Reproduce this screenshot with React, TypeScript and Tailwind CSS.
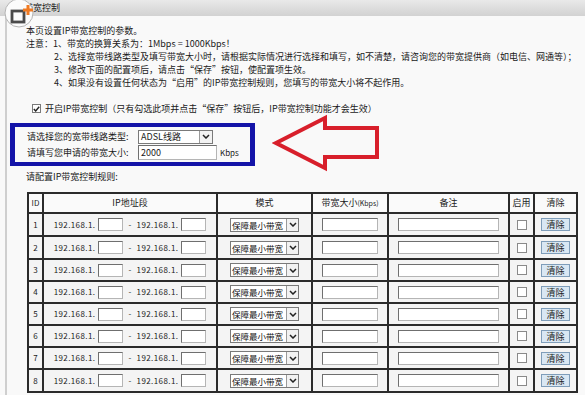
import React from "react";

const font = { fontFamily: '"Noto Sans CJK SC", "Noto Sans", sans-serif' };

const rowHeights = ["h-[23px]", "h-[23px]", "h-[22px]", "h-[22px]", "h-[22px]", "h-[22px]", "h-[22px]", "h-[23px]"];

const cols = "grid grid-cols-[15px_174px_95px_76px_121px_25px_43px]";
const cell = "border-r-2 border-b-2 border-[#2b2b2b] bg-[#f4f4f4] flex items-center justify-center";

const Chevron = () => (
  <svg width="8" height="5" viewBox="0 0 8 5">
    <path d="M1 1 L4 4 L7 1" fill="none" stroke="#222" strokeWidth="1.5" />
  </svg>
);

const TextBox = ({ w }: { w: string }) => (
  <span className={`inline-block ${w} h-[13px] bg-white border border-[#6f6f6f] border-r-[#b5b5b5] border-b-[#b5b5b5]`} />
);

const ModeSelect = () => (
  <div className="flex items-stretch w-[69px] h-[14px] bg-white border border-[#7a7a7a] text-[8.5px] leading-[12px] text-[#111] overflow-hidden">
    <span className="flex-1 pl-[1px] whitespace-nowrap overflow-hidden">保障最小带宽</span>
    <span className="w-[12px] shrink-0 flex items-center justify-center border-l border-[#9a9a9a] bg-[#f2f2f2]">
      <Chevron />
    </span>
  </div>
);

const CornerIcon = () => (
  <svg className="absolute left-[4px] top-0" width="32" height="30" viewBox="0 0 32 30">
    <circle cx="15" cy="13" r="14" fill="#fbfbfb" stroke="#b4b4b4" />
    <rect x="8" y="11" width="12" height="11" fill="none" stroke="#4a4a4a" strokeWidth="2.8" />
    <path d="M24 5 V15 M19 10 H29" stroke="#f07a22" strokeWidth="3" />
  </svg>
);

const Arrow = () => (
  <svg className="absolute left-[272px] top-[114px]" width="110" height="58" viewBox="0 0 110 58">
    <path
      d="M4 29 L53 4 L53 14 L105 14 L105 43 L53 43 L53 54 Z"
      fill="none"
      stroke="#d81f2b"
      strokeWidth="4"
    />
  </svg>
);

const headers = ["ID", "IP地址段", "模式", "带宽大小", "备注", "启用", "清除"];

export default function App() {
  return (
    <div className="relative w-[585px] h-[395px] overflow-hidden bg-[#f9f9f9] text-[#1a1a1a]" style={font}>
      {/* title bar */}
      <div className="h-[16px] bg-gradient-to-b from-[#e9e9e9] to-[#d2d2d2] pl-[24px] text-[9px] leading-[16px]">
        带宽控制
      </div>

      <div className="border-l-2 border-[#cfcfcf] ml-[5px] h-[379px] pt-[8px]">
        {/* notes */}
        <div className="pl-[19px] text-[9px] leading-[13px]">
          <div>本页设置IP带宽控制的参数。</div>
          <div>注意：1、带宽的换算关系为：1Mbps = 1000Kbps！</div>
          <div className="pl-[28px]">2、选择宽带线路类型及填写带宽大小时，请根据实际情况进行选择和填写，如不清楚，请咨询您的带宽提供商（如电信、网通等）；</div>
          <div className="pl-[28px]">3、修改下面的配置项后，请点击“保存”按钮，使配置项生效。</div>
          <div className="pl-[28px]">4、如果没有设置任何状态为“启用”的IP带宽控制规则，您填写的带宽大小将不起作用。</div>
        </div>

        {/* enable */}
        <div className="mt-[13px] pl-[25px] flex items-center gap-[4px] text-[9px] leading-[13px]">
          <span className="w-[9px] h-[9px] bg-white border border-[#7a7a7a] flex items-center justify-center">
            <svg width="7" height="6" viewBox="0 0 7 6">
              <path d="M0.8 3 L2.7 5 L6.2 0.8" fill="none" stroke="#222" strokeWidth="1.4" />
            </svg>
          </span>
          <span>开启IP带宽控制（只有勾选此项并点击“保存”按钮后，IP带宽控制功能才会生效）</span>
        </div>

        {/* line type box */}
        <div className="mt-[8px] ml-[3px] w-[245px] border-x-[5px] border-y-[4px] border-[#1414a8] py-[2px] pl-[12px] text-[9px] flex flex-col gap-[1px]">
          <div className="flex items-center h-[15px]">
            <span className="w-[111px]">请选择您的宽带线路类型:</span>
            <div className="flex items-stretch w-[75px] h-[14px] bg-white border border-[#7a7a7a] leading-[12px]">
              <span className="flex-1 pl-[2px]">ADSL线路</span>
              <span className="w-[13px] flex items-center justify-center border-l border-[#9a9a9a] bg-[#f2f2f2]">
                <Chevron />
              </span>
            </div>
          </div>
          <div className="flex items-center h-[15px]">
            <span className="w-[111px]">请填写您申请的带宽大小:</span>
            <span className="w-[79px] h-[15px] bg-white border border-[#6f6f6f] border-r-[#b5b5b5] border-b-[#b5b5b5] pl-[2px] leading-[13px]">2000</span>
            <span className="ml-[3px] text-[8px]">Kbps</span>
          </div>
        </div>

        <div className="mt-[4px] pl-[19px] text-[9px] leading-[13px]">请配置IP带宽控制规则:</div>

        {/* rules table */}
        <div className="mt-[9px] ml-[20px] w-[551px] border-l-2 border-t-2 border-[#2b2b2b] text-[9px]">
          <div className={`${cols} h-[20px]`}>
            {headers.map((t, i) => (
              <div key={t} className={`${cell} bg-[#fafafa] ${i === 0 ? "text-[8px]" : ""}`}>
                {t}
                {i === 3 && <span className="text-[7px]">(Kbps)</span>}
              </div>
            ))}
          </div>
          {rowHeights.map((h, i) => (
            <div key={i} className={`${cols} ${h}`}>
              <div className={`${cell} text-[8px]`}>{i + 1}</div>
              <div className={`${cell} gap-[3px] text-[8px] tracking-[0.4px]`}>
                <span>192.168.1.</span>
                <TextBox w="w-[25px]" />
                <span className="mx-[2px]">-</span>
                <span>192.168.1.</span>
                <TextBox w="w-[25px]" />
              </div>
              <div className={cell}>
                <ModeSelect />
              </div>
              <div className={cell}>
                <TextBox w="w-[56px]" />
              </div>
              <div className={cell}>
                <TextBox w="w-[101px]" />
              </div>
              <div className={cell}>
                <span className="w-[10px] h-[10px] bg-white border border-[#8a8a8a]" />
              </div>
              <div className={cell}>
                <span className="w-[29px] h-[13px] bg-[#d9e7f3] border border-[#7f9db9] text-[9px] leading-[11px] text-center">清除</span>
              </div>
            </div>
          ))}
        </div>
      </div>

      <CornerIcon />
      <Arrow />
    </div>
  );
}
